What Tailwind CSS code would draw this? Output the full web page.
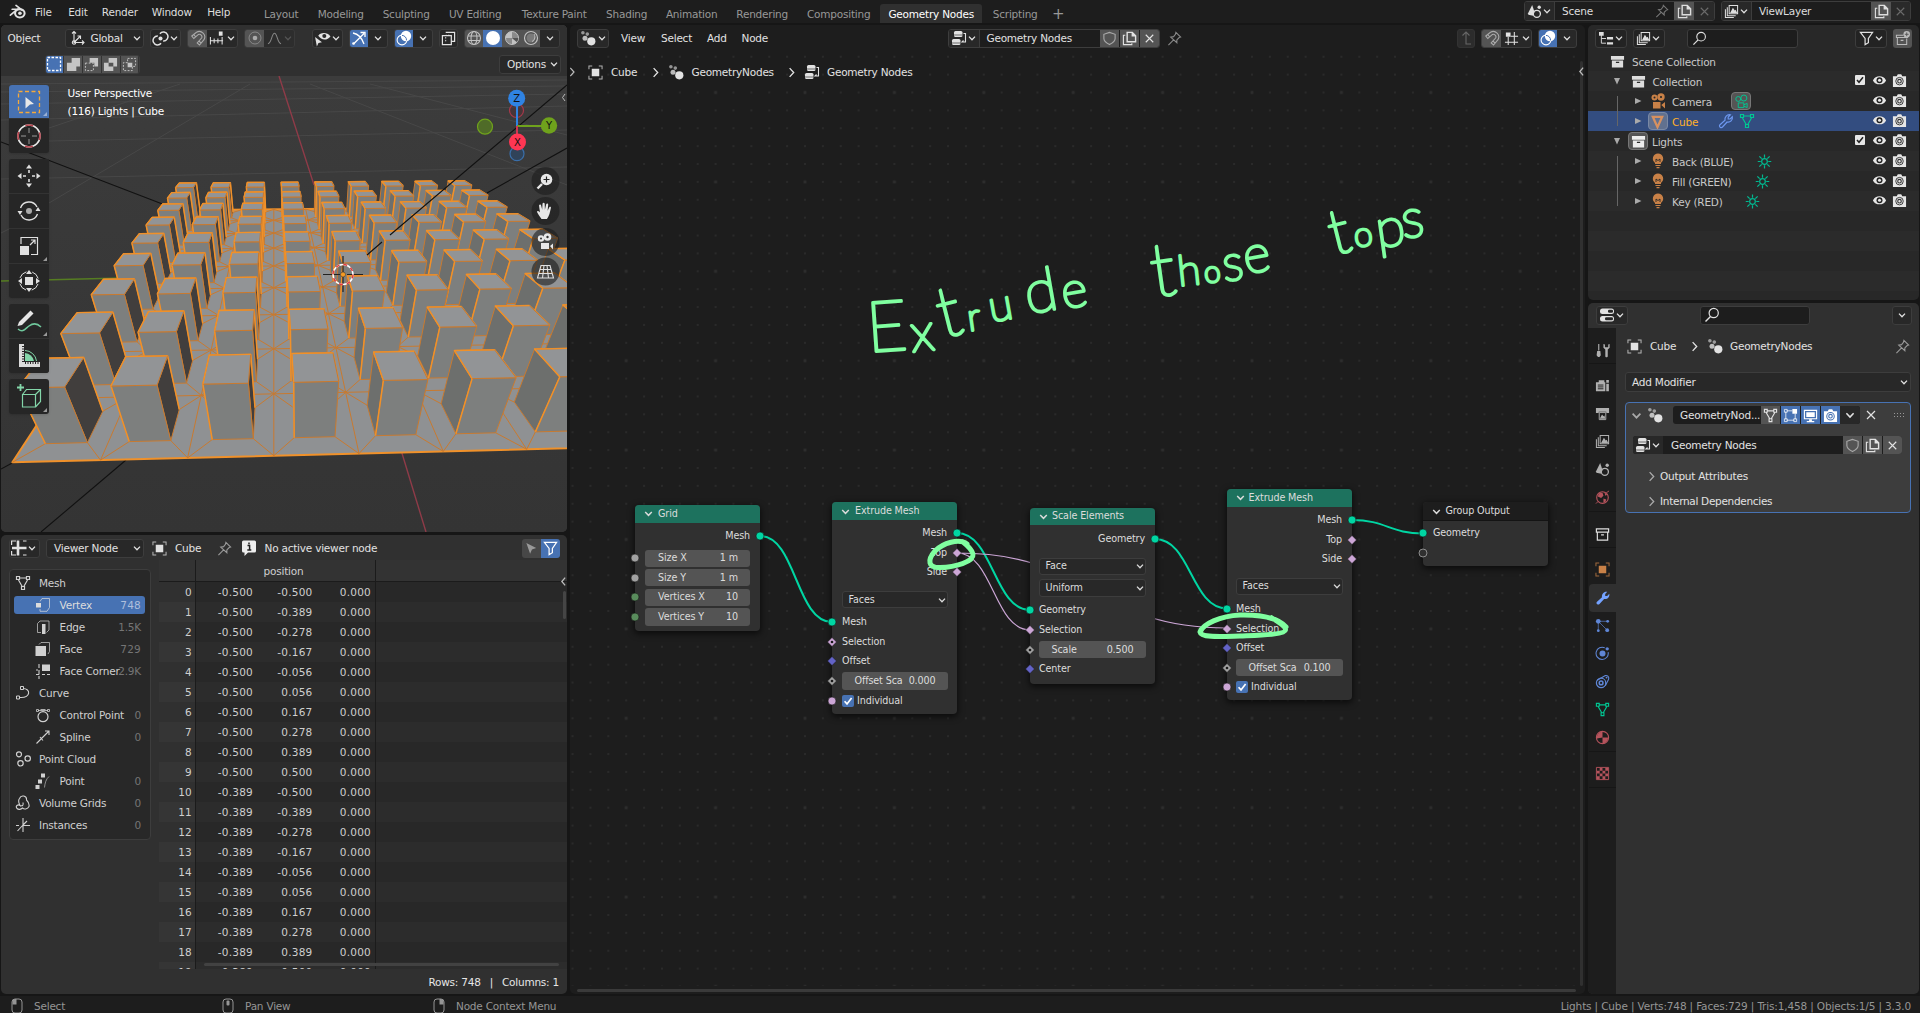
<!DOCTYPE html>
<html lang="en">
<head>
<meta charset="utf-8">
<title>Blender</title>
<script src="https://cdn.jsdelivr.net/npm/@tailwindcss/browser@4"></script>
</head>
<body class="w-[1920px] h-[1013px] overflow-hidden bg-[#161616] text-[#e2e2e2] font-['DejaVu_Sans',sans-serif] text-[10.5px] leading-[14px] tracking-[-0.22px] whitespace-nowrap select-none">

<svg class="hidden" xmlns="http://www.w3.org/2000/svg">
  <defs>
  <symbol id="chev" viewBox="0 0 10 10"><path d="M2 3.6 5 6.7 8 3.6" fill="none" stroke="currentColor" stroke-width="1.3"/></symbol>
  <symbol id="right" viewBox="0 0 10 10"><path d="M3.3 1 7 5 3.3 9" fill="none" stroke="currentColor" stroke-width="1.2"/></symbol>
  <symbol id="left" viewBox="0 0 10 10"><path d="M6.5 1.5 3.5 5 6.5 8.500" fill="none" stroke="currentColor" stroke-width="1.2"/></symbol>
  <symbol id="x" viewBox="0 0 16 16"><path d="M4 4l8 8M12 4l-8 8" fill="none" stroke="currentColor" stroke-width="1.2"/></symbol>
  <symbol id="logo" viewBox="0 0 16 16"><g fill="none" stroke="currentColor" stroke-linecap="round"><path d="M1.300 11.500 8 5.800M3 5.900h7M6.600 2.300l6 4.600" stroke-width="1.600"/><ellipse cx="10.200" cy="9.700" rx="4.500" ry="3.900" stroke-width="1.900"/></g><circle cx="10.300" cy="9.600" r="1.700" fill="currentColor"/></symbol>
  <symbol id="axes" viewBox="0 0 16 16"><g fill="none" stroke="currentColor" stroke-width="1.100"><path d="M4 1.500v11h10M4 12.500l6-6M2 3.500l2-2 2 2M12 10.500l2 2-2 2M7.500 6h3v3"/><circle cx="4" cy="12.500" r="1.700"/></g></symbol>
  <symbol id="pivot" viewBox="0 0 16 16"><g fill="none" stroke="currentColor" stroke-width="1.400"><path d="M8.500 12.500A4.200 4.200 0 1 1 5.500 5.700M7.500 3.500a4.200 4.200 0 1 1 3 6.800"/></g><circle cx="8" cy="8" r="1.900" fill="currentColor"/></symbol>
  <symbol id="magnet" viewBox="0 0 16 16"><path d="M1.800 6 6.500 2.200a5.500 5.500 0 0 1 7.500 7.500L9.500 15l-2.300-2 4.400-5A2.500 2.500 0 0 0 8.200 4.600L3.800 8.500zM8.800 11l2.300 2M3.700 4.500l2 2.300" fill="none" stroke="currentColor" stroke-width="1.100"/></symbol>
  <symbol id="incr" viewBox="0 0 16 16"><path d="M1 10.500h14M1.500 6.500v8M5.500 8v5M9.500 8v5M14 6.500v8" stroke="currentColor" stroke-width="1.100"/><path d="M10.500.5h4v4.500h-4z" fill="currentColor"/></symbol>
  <symbol id="prop" viewBox="0 0 16 16"><circle cx="8" cy="8" r="6" fill="none" stroke="currentColor" opacity=".6"/><circle cx="8" cy="8" r="2.300" fill="currentColor"/></symbol>
  <symbol id="curvef" viewBox="0 0 16 16"><path d="M1 13.500c4-.5 4-11 7-11s3 10.500 7 11" fill="none" stroke="currentColor" stroke-width="1.100"/></symbol>
  <symbol id="viseye" viewBox="0 0 16 16"><path d="M4 5.500C6 2 12.500 2 15.500 6 12.500 10 7 10 4 5.500z" fill="currentColor"/><circle cx="9.700" cy="5.700" r="1.900" fill="#282828"/><path d="M1 6.500l6.500 5-3.300.8-1.500 3.200z" fill="currentColor"/></symbol>
  <symbol id="gizmo" viewBox="0 0 16 16"><path d="M2 3c5 1 9 5 11 11M2.500 14 13 3.500M9.500 2.500H14V7" fill="none" stroke="currentColor" stroke-width="1.300"/><circle cx="2.500" cy="13.500" r="1.300" fill="currentColor"/></symbol>
  <symbol id="overlay" viewBox="0 0 16 16"><circle cx="10" cy="6" r="5.200" fill="currentColor"/><circle cx="6" cy="10" r="4.900" fill="none" stroke="currentColor" stroke-width="1.100"/><path d="M6 5.400a4.600 4.600 0 0 1 4.500 5" fill="none" stroke="#4772b3"/></symbol>
  <symbol id="xray" viewBox="0 0 16 16"><path d="M5 1.500h9.500V11H11M1.500 5h9.500v9.500H1.500z" fill="none" stroke="currentColor" stroke-width="1.300"/><path d="M5 11V4.500h6" fill="none" stroke="currentColor" stroke-dasharray="1.500 1.500"/></symbol>
  <symbol id="globe" viewBox="0 0 16 16"><g fill="none" stroke="currentColor" stroke-width="1.100"><circle cx="8" cy="8" r="6.500"/><ellipse cx="8" cy="8" rx="3" ry="6.500"/><path d="M2 6h12M2 10.500h12"/></g></symbol>
  <symbol id="solid" viewBox="0 0 16 16"><circle cx="8" cy="8" r="7" fill="currentColor"/></symbol>
  <symbol id="matp" viewBox="0 0 16 16"><circle cx="8" cy="8" r="6.500" fill="#8a8a8a" stroke="currentColor"/><path d="M8 1.700V8H1.700A6.300 6.300 0 0 1 8 1.700zM8 8l5 4.200A6.300 6.300 0 0 1 8 14.300z" fill="currentColor"/><path d="M8 8h6.300A6.300 6.300 0 0 1 12.800 12z" fill="#545454"/></symbol>
  <symbol id="rend" viewBox="0 0 16 16"><circle cx="8" cy="8" r="6.500" fill="none" stroke="currentColor" stroke-width="1.200"/><circle cx="8" cy="8" r="4.500" fill="currentColor" opacity=".35"/><path d="M11 4c1.500 2 1.300 6-2 7.500" fill="none" stroke="currentColor"/></symbol>
  <symbol id="sel1" viewBox="0 0 16 16"><path d="M1.500 1.500h13v13h-13z" fill="none" stroke="currentColor" stroke-width="1.300" stroke-dasharray="2.500 1.500"/></symbol>
  <symbol id="sel2" viewBox="0 0 16 16"><path d="M6 1h9v9h-4v5H1V6h5z" fill="currentColor"/></symbol>
  <symbol id="sel3" viewBox="0 0 16 16"><path d="M6 1h9v9h-4V6H6z" fill="currentColor"/><path d="M1.500 6.500h8.500v8H1.500z" fill="none" stroke="currentColor" stroke-dasharray="2 1.500"/></symbol>
  <symbol id="sel4" viewBox="0 0 16 16"><path d="M6 1h9v9h-4v5H1V6h5zM6 6v4h5V6z" fill="currentColor" fill-rule="evenodd"/></symbol>
  <symbol id="sel5" viewBox="0 0 16 16"><path d="M6 6h5v5H6z" fill="currentColor"/><path d="M6 1.500h8.500V10H11v4.500H1.500V6H6z" fill="none" stroke="currentColor" stroke-dasharray="2 1.500"/></symbol>
  <symbol id="geo" viewBox="0 0 16 16"><g fill="currentColor"><circle cx="2.900" cy="2.800" r="1.800" opacity=".6"/><circle cx="7.300" cy="4.100" r="1.800" opacity=".6"/><circle cx="5" cy="8.200" r="2.500" opacity=".8"/><circle cx="11.300" cy="11.300" r="4.100"/></g></symbol>
  <symbol id="tree" viewBox="0 0 16 16"><rect x="3" y="1" width="8.500" height="6" rx="1.500" fill="currentColor"/><rect x="1" y="9" width="8.500" height="6" rx="1.500" fill="currentColor"/><path d="M2 5h10M0 13h10" stroke="#1d1d1d" stroke-width=".6"/><path d="M12.500 3.500h2v8.500h-3.500l1.500-1.500" fill="none" stroke="currentColor" stroke-width="1.100"/></symbol>
  <symbol id="shield" viewBox="0 0 16 16"><path d="M8 1.500 2 3.500V8c0 3.500 4 5.500 6 6.500 2-1 6-3 6-6.500V3.500z" fill="none" stroke="currentColor" stroke-width="1.200"/></symbol>
  <symbol id="copy" viewBox="0 0 16 16"><path d="M5.500 1.500H11L14.500 5v6.500h-9zM11 1.500V5h3.500" fill="none" stroke="currentColor" stroke-width="1.500"/><path d="M3.500 4.500h-2v10h9v-1.500" fill="none" stroke="currentColor" stroke-width="1.200"/></symbol>
  <symbol id="pin" viewBox="0 0 16 16"><path d="M9.500 1.500l5 5-1.500.5-2.500 2.500v3L4 6.500 7 6l2-2.500zM7 9.500 1.500 15" fill="none" stroke="currentColor" stroke-width="1.200"/></symbol>
  <symbol id="uparr" viewBox="0 0 16 16"><path d="M13 14H8V2M4.500 5.500 8 2l3.500 3.500" fill="none" stroke="currentColor" stroke-width="1.100"/></symbol>
  <symbol id="gridsnap" viewBox="0 0 16 16"><path d="M4.500 6v9M11 1v14M1 12h14M7 5.500h8" stroke="currentColor" stroke-width="1.100"/><path d="M2 1.500h5V6H2z" fill="currentColor"/></symbol>
  <symbol id="scene" viewBox="0 0 16 16"><path d="M5.500 1 8 8.500l-1.500 4-5-1L1 10z" fill="currentColor"/><circle cx="10.500" cy="10.500" r="3.800" fill="none" stroke="currentColor" stroke-width="1.400"/><circle cx="13" cy="3.500" r="1.800" fill="currentColor"/></symbol>
  <symbol id="layers" viewBox="0 0 16 16"><path d="M5.500 1.500h9v9h-9zM3.500 3.500v9h9M1.500 5.500v9h9" fill="none" stroke="currentColor" stroke-width="1.100"/><path d="M6.500 9.500 9.500 4l2 3 1-1 1.500 3.500z" fill="currentColor"/></symbol>
  <symbol id="outl" viewBox="0 0 16 16"><path d="M0 1h5v4H0zM8.500 6.500H15V9H8.500zM8.500 12H15v2.500H8.500z" fill="currentColor"/><path d="M2.500 4v9h5M2.500 8h5" fill="none" stroke="currentColor"/></symbol>
  <symbol id="search" viewBox="0 0 16 16"><circle cx="9.700" cy="6" r="4.600" fill="none" stroke="currentColor" stroke-width="1.200"/><path d="M6.500 9.500 1.500 14.500" stroke="currentColor" stroke-width="1.400"/></symbol>
  <symbol id="funnel" viewBox="0 0 16 16"><path d="M1.500 1.500h13L10 8v4.500L6.500 14.500V8z" fill="none" stroke="currentColor" stroke-width="1.300"/></symbol>
  <symbol id="newcol" viewBox="0 0 16 16"><path d="M9 4.500H1.500V7H14M2.500 7v7.500h10V8M6 10h3" fill="none" stroke="currentColor" stroke-width="1.100"/><circle cx="12.500" cy="3.500" r="3.500" fill="currentColor"/><path d="M12.500 1.500v4M10.500 3.500h4" stroke="#545454"/></symbol>
  <symbol id="coll" viewBox="0 0 16 16"><path d="M1 2h14v4H1zM2 7h12v7.500H2z" fill="currentColor"/><path d="M6.300 9h3.500" stroke="#282828" stroke-width="1.400"/></symbol>
  <symbol id="collo" viewBox="0 0 16 16"><path d="M1.500 2h13v3.500h-13zM2.500 5.500h11v8.500h-11zM6.500 8.500h3" fill="none" stroke="currentColor" stroke-width="1.300"/></symbol>
  <symbol id="cam" viewBox="0 0 16 16"><circle cx="4.500" cy="4.500" r="3" fill="currentColor"/><circle cx="11" cy="4" r="3.700" fill="currentColor"/><circle cx="4.500" cy="4.500" r="1" fill="#282828"/><circle cx="11" cy="4" r="1.100" fill="#282828"/><path d="M3 9h7.500v6.500H3zM11.300 12l3.700-3v6.500z" fill="currentColor"/></symbol>
  <symbol id="camo" viewBox="0 0 16 16"><g fill="none" stroke="currentColor"><circle cx="4.500" cy="5.300" r="2.600"/><circle cx="10.500" cy="4.300" r="3.200"/><path d="M4.500 9.500h6v5h-6zM10.500 11.500 14 10v4.500l-3.500-1.500"/></g></symbol>
  <symbol id="meshobj" viewBox="0 0 16 16"><path d="M3 3h10L8 14z" fill="none" stroke="currentColor" stroke-width="2.400"/></symbol>
  <symbol id="meshd" viewBox="0 0 16 16"><path d="M4.500 3h7M3.500 5l3.700 6.500M12.500 5l-3.700 6.500M1.500 1.500h3v3h-3zM11.500 1.500h3v3h-3zM6.500 11.500h3v3h-3z" fill="none" stroke="currentColor" stroke-width="1.200"/></symbol>
  <symbol id="wrench" viewBox="0 0 16 16"><path d="M2.200 14.200a1.500 1.500 0 0 1-.2-2.400L7 7.300C6.400 4 9 1.200 12.300 1.800L10.200 4v2h2l2.100-2.200c.7 3.300-2.100 5.900-5.200 5.200L4.500 14a1.800 1.800 0 0 1-2.300.2z" fill="currentColor"/></symbol>
  <symbol id="wrencho" viewBox="0 0 16 16"><path d="M2.200 14.200a1.500 1.500 0 0 1-.2-2.400L7 7.300C6.400 4 9 1.200 12.300 1.800L10.200 4v2h2l2.100-2.200c.7 3.300-2.100 5.900-5.200 5.200L4.500 14a1.800 1.800 0 0 1-2.300.2z" fill="none" stroke="currentColor" stroke-width="1.200"/></symbol>
  <symbol id="bulb" viewBox="0 0 16 16"><path d="M8 .5a5.200 5.200 0 0 0-3 9.400V11h6V9.900A5.200 5.200 0 0 0 8 .5zM5.500 12h5v1h-5zM6.500 14h3v1.200h-3z" fill="currentColor"/><path d="M6 9V6l2 1.500L10 6v3" fill="none" stroke="#282828" stroke-width=".9"/></symbol>
  <symbol id="sun" viewBox="0 0 16 16"><circle cx="8" cy="8" r="3" fill="none" stroke="currentColor" stroke-width="1.300"/><path d="M8 .5v3.500M8 12v3.500M.8 8H4M12 8h3.200M2.500 2.500 5 5M11 11l2.500 2.500M13.500 2.500 11 5M5 11l-2.500 2.500" stroke="currentColor" stroke-width="1.300"/></symbol>
  <symbol id="check" viewBox="0 0 12 12"><rect x="1" y="1" width="10" height="10" rx="1" fill="#e6e6e6"/><path d="M3 6l2 2.300L9 3.200" fill="none" stroke="#222" stroke-width="1.500"/></symbol>
  <symbol id="eye" viewBox="0 0 16 16"><path d="M1 8c2.500-6 11.500-6 14 0-2.500 5.500-11.500 5.500-14 0z" fill="currentColor"/><circle cx="8" cy="7.700" r="3.200" fill="#222"/><circle cx="8" cy="7.700" r="1.600" fill="currentColor"/></symbol>
  <symbol id="photo" viewBox="0 0 16 16"><path d="M1 3.500h4L6.200 1.200h3.600L11 3.500h4v11.300H1z" fill="currentColor"/><circle cx="8" cy="8.700" r="4" fill="none" stroke="#333" stroke-width="1"/><circle cx="8" cy="8.700" r="1.900" fill="none" stroke="#333" stroke-width="1.200"/></symbol>
  <symbol id="photob" viewBox="0 0 16 16"><path d="M1 3.500h4L6.200 1.200h3.600L11 3.500h4v11.300H1z" fill="currentColor"/><circle cx="8" cy="8.700" r="4" fill="none" stroke="#4772b3" stroke-width="1.100"/><circle cx="8" cy="8.700" r="1.900" fill="none" stroke="#4772b3" stroke-width="1.200"/></symbol>
  <symbol id="props" viewBox="0 0 16 16"><rect x="1" y="1.500" width="14" height="5.500" rx="2.500" fill="currentColor"/><rect x="1" y="9" width="14" height="5.500" rx="2.500" fill="currentColor"/><rect x="9" y="2.700" width="5" height="3" rx="1.300" fill="#282828"/><rect x="6" y="10.200" width="8" height="3" rx="1.300" fill="#282828"/></symbol>
  <symbol id="obj" viewBox="0 0 16 16"><path d="M4 4h8v8H4z" fill="currentColor"/><path d="M1 4.500V1h3.500M11.500 1H15v3.500M15 11.500V15h-3.500M4.500 15H1v-3.500" fill="none" stroke="currentColor" stroke-width="1.100" opacity=".75"/></symbol>
  <symbol id="tool" viewBox="0 0 16 16"><path d="M4 1v7" stroke="currentColor" stroke-width="1.200"/><path d="M2.300 8.500h3.400l.5 4.500-1.500 2h-1.500l-1.500-2zM9 1v4l2 2v7c0 1.500 2.600 1.500 2.600 0V7l2-2V1l-1.500.5v3h-3.500v-3z" fill="currentColor"/></symbol>
  <symbol id="render" viewBox="0 0 16 16"><path d="M1 4.500h3V2.500h6v2h1V14H1zM12 2h2.800v3H12zM12 6h2.800v8H12z" fill="currentColor"/><path d="M3 7.500h6M3 9.500h6M3 11.500h6" stroke="#1d1d1d"/></symbol>
  <symbol id="output" viewBox="0 0 16 16"><path d="M1 2h14v5.500h-3V6H4v1.500H1z" fill="currentColor"/><path d="M4.500 7h7v7.500h-7z" fill="none" stroke="currentColor"/><path d="M5 13.500 7.500 9l1.500 2 1-1 1 3.500z" fill="currentColor"/></symbol>
  <symbol id="world" viewBox="0 0 16 16"><circle cx="8" cy="8" r="6.200" fill="none" stroke="currentColor" stroke-width="1.200"/><path d="M4 3.500 8 3 9 6 6.500 8.500 3 7zM9 9l3 1-1 3-2 .5zM10 2l3 3-2 1z" fill="currentColor"/><path d="M12 3l3-2M1 14.500l2.500-2.500" stroke="currentColor"/></symbol>
  <symbol id="part" viewBox="0 0 16 16"><path d="M3.500 3.500 14 14M3.500 3.500V14M3.500 3.500H14" stroke="currentColor" opacity=".7"/><circle cx="3.500" cy="3.500" r="2.500" fill="currentColor"/><circle cx="13" cy="13" r="2" fill="currentColor"/><circle cx="3.500" cy="13.500" r="1.500" fill="currentColor"/><circle cx="13.500" cy="3.500" r="1.500" fill="currentColor"/></symbol>
  <symbol id="phys" viewBox="0 0 16 16"><path d="M10.500 2A6.500 6.500 0 1 0 14 6.500" fill="none" stroke="currentColor" stroke-width="1.100"/><circle cx="8" cy="8" r="3.200" fill="currentColor"/><circle cx="13" cy="3" r="1.800" fill="currentColor"/></symbol>
  <symbol id="cons" viewBox="0 0 16 16"><path d="M2 7 11 1.700a3 3 0 0 1 3.500 4L11 12.500" fill="none" stroke="currentColor" stroke-width="1.200"/><circle cx="6.500" cy="9.500" r="5" fill="none" stroke="currentColor" stroke-width="1.300"/><circle cx="6.500" cy="9.500" r="2" fill="none" stroke="currentColor" stroke-width="1.600"/><circle cx="12.300" cy="3.800" r="1" fill="currentColor"/></symbol>
  <symbol id="mat" viewBox="0 0 16 16"><circle cx="8" cy="8" r="6.500" fill="none" stroke="currentColor" stroke-width="1.200"/><path d="M8 1.500V8H14A6.500 6.500 0 0 1 8 14.500V8L2 9A6.500 6.500 0 0 1 8 1.500z" fill="currentColor"/></symbol>
  <symbol id="tex" viewBox="0 0 16 16"><path d="M1.500 1.500h13v13h-13z" fill="none" stroke="currentColor"/><path d="M5 2h3v3H5zM11 2h3v3h-3zM2 5h3v3H2zM8 5h3v3H8zM5 8h3v3H5zM11 8h3v3h-3zM2 11h3v3H2zM8 11h3v3H8z" fill="currentColor"/></symbol>
  <symbol id="edit" viewBox="0 0 16 16"><path d="M4 3h6M3 4v8M4 13h8M13 12V6" fill="none" stroke="currentColor" opacity=".8"/><path d="M10 1h5v5h-5z" fill="currentColor"/><path d="M1.500 1.500h3v3h-3zM1.500 11.500h3v3h-3zM11.500 11.500h3v3h-3z" fill="none" stroke="currentColor" opacity=".8"/></symbol>
  <symbol id="mon" viewBox="0 0 16 16"><path d="M1.500 2.500h13v9h-13zM4 14.500h8" fill="none" stroke="currentColor" stroke-width="1.200"/><path d="M3.500 4.500h9v5h-9zM6.500 12h3v2h-3z" fill="currentColor"/></symbol>
  <symbol id="sheet" viewBox="0 0 16 16"><path d="M.600 1H5M.600.500v4.500M15.500 1H12M.600 15.500V11M.600 15H5M15.500 15H12" stroke="currentColor" fill="none" stroke-width="1.200"/><path d="M7 .5v15M1 8h14.500" stroke="currentColor" stroke-width="2.600"/></symbol>
  <symbol id="info" viewBox="0 0 16 16"><path d="M2.500 .500h11A1.500 1.500 0 0 1 15 2v9a1.500 1.500 0 0 1-1.500 1.500H7L3.500 16v-3.500h-1A1.500 1.500 0 0 1 1 11V2A1.500 1.500 0 0 1 2.500.5z" fill="currentColor"/><path d="M6.500 5.500H8.600v4M6.300 9.900h4M8 2.500v1.700" stroke="#222" stroke-width="1.500" fill="none"/></symbol>
  <symbol id="curs" viewBox="0 0 16 16"><path d="M2.500 2 13 7.500 8.500 9l-2 4.500z" fill="currentColor"/></symbol>
  <symbol id="vert" viewBox="0 0 16 16"><path d="M5 4.500l2-3h7.500v9L12 14.300H5V12" fill="none" stroke="currentColor" opacity=".7"/><path d="M1 6h5v4.500H1z" fill="currentColor"/></symbol>
  <symbol id="edge" viewBox="0 0 16 16"><path d="M6 13.500H2.500V4.500L5 2h9v9L11.500 13.500" fill="none" stroke="currentColor" opacity=".7"/><path d="M7 5h3.500v10H7z" fill="currentColor"/></symbol>
  <symbol id="face" viewBox="0 0 16 16"><path d="M4 3.500 6 1.500h8.500v9L13 13" fill="none" stroke="currentColor" opacity=".7"/><path d="M.5 5H11v10H.5z" fill="currentColor"/></symbol>
  <symbol id="corner" viewBox="0 0 16 16"><path d="M7 1.500h8V8H7z" fill="currentColor"/><path d="M4 1v4M4 7v4.500M4 13v3M1 11.500h3M7 11.500h3M12 11.500h3M1 7h2" stroke="currentColor" stroke-width="1.100"/></symbol>
  <symbol id="curve" viewBox="0 0 16 16"><path d="M8 3.500C16 3.500 16 13 5 12.500" fill="none" stroke="currentColor" stroke-width="1.100"/><path d="M5.500 1.500h3v3h-3zM1.500 11h3v3h-3z" fill="none" stroke="currentColor"/></symbol>
  <symbol id="ctrl" viewBox="0 0 16 16"><circle cx="8" cy="9.700" r="5" fill="none" stroke="currentColor" stroke-width="1.200"/><path d="M3 3.500h10M5.500 2.500h5M1.500 2.500h2v2h-2zM12.500 2.500h2v2h-2z" fill="none" stroke="currentColor" stroke-width=".8"/></symbol>
  <symbol id="spline" viewBox="0 0 16 16"><path d="M1.500 14.500 14 2M10 2h4v4M5 8l3 3.500" fill="none" stroke="currentColor" stroke-width="1.100"/></symbol>
  <symbol id="pcloud" viewBox="0 0 16 16"><g fill="none" stroke="currentColor" stroke-width="1.200"><circle cx="4" cy="3.300" r="2.500"/><circle cx="12.700" cy="7.500" r="2.700"/><circle cx="5.500" cy="12.300" r="2.700"/></g></symbol>
  <symbol id="point" viewBox="0 0 16 16"><path d="M6 .5h4v4H6zM3 6.500h4v4H3zM.5 12h4v4h-4z" fill="currentColor"/><path d="M14 3.500C11 6 10 10 9.500 14.500" fill="none" stroke="currentColor" opacity=".6"/></symbol>
  <symbol id="vol" viewBox="0 0 16 16"><path d="M2 13.500C0 11 3 9 5 10.500 4 8 2.500 6 4.500 3.500 6-.5 12 .5 11.500 5 13.500 7 14.500 9 14 11.500c-1.500 3-5 3-6.500 1.500-1.500 1.500-4 2-5.500.5zM5 10.500c2.500.5 3.500.5 3-3" fill="none" stroke="currentColor" stroke-width="1.100"/></symbol>
  <symbol id="inst" viewBox="0 0 16 16"><path d="M8 1v14M8 8.500h7M1 8.500h3M8 8 2.500 14M8 8l4-4" fill="none" stroke="currentColor" stroke-width="1.100"/></symbol>
  <symbol id="mL" viewBox="0 0 12 16"><rect x="1" y="1" width="10" height="14" rx="3" fill="none" stroke="currentColor"/><path d="M1.500 6.500V3.500A2.500 2.500 0 0 1 4 1h1.500v5.500z" fill="currentColor"/></symbol>
  <symbol id="mM" viewBox="0 0 12 16"><rect x="1" y="1" width="10" height="14" rx="3" fill="none" stroke="currentColor"/><rect x="4.500" y="2.500" width="3" height="5" rx="1" fill="currentColor"/></symbol>
  <symbol id="mR" viewBox="0 0 12 16"><rect x="1" y="1" width="10" height="14" rx="3" fill="none" stroke="currentColor"/><path d="M10.500 6.500V3.500A2.500 2.500 0 0 0 8 1H6.500v5.500z" fill="currentColor"/></symbol>
  <symbol id="dia" viewBox="0 0 10 10"><path d="M5 .5 9.500 5 5 9.500.5 5z" fill="currentColor" stroke="#161616" stroke-width=".5"/></symbol>
  <symbol id="diao" viewBox="0 0 10 10"><path d="M5 .5 9.500 5 5 9.500.5 5z" fill="currentColor" stroke="#161616" stroke-width=".5"/><circle cx="5" cy="5" r="1.300" fill="#1a1a1a"/></symbol>
  <symbol id="dot" viewBox="0 0 10 10"><circle cx="5" cy="5" r="4" fill="currentColor" stroke="#161616" stroke-width=".6"/></symbol>
  <symbol id="tick" viewBox="0 0 12 12"><rect width="12" height="12" rx="2" fill="#4772b3"/><path d="M2.600 6.200 5 8.900 9.600 3" fill="none" stroke="#fff" stroke-width="1.700"/></symbol>
  </defs>
</svg>

<!-- Top bar -->
<header class="h-[23px] bg-[#1d1d1d] flex items-start">
  <svg class="size-[17px] ml-[9px] mt-[3px]"><use href="#logo"/></svg>
  <nav class="flex h-[23px] items-center text-[#dedede] pl-[9px]">
    <span class="w-[33.2px]">File</span><span class="w-[33.6px]">Edit</span><span class="w-[50px]">Render</span><span class="w-[55.400px]">Window</span><span class="w-[47px]">Help</span>
  </nav>
  <nav class="flex mt-[4px] h-[19px] items-center text-center text-[#989898]">
    <span class="w-[54px]">Layout</span><span class="w-[65px]">Modeling</span><span class="w-[66px]">Sculpting</span><span class="w-[72px]">UV Editing</span><span class="w-[86px]">Texture Paint</span><span class="w-[59px]">Shading</span><span class="w-[71px]">Animation</span><span class="w-[70px]">Rendering</span><span class="w-[83px]">Compositing</span><span class="w-[102px] h-[19px] leading-[20px] bg-[#303030] text-white rounded-t-[3px]">Geometry Nodes</span><span class="w-[66px]">Scripting</span><span class="w-[20px] text-[15px] leading-[14px]">+</span>
  </nav>
  <div class="ml-auto mr-[9px] mt-[1px] flex h-[20px] gap-[6px] text-[#dedede]">
    <div class="flex w-[191px] rounded-[3px] overflow-hidden border border-[#3d3d3d] items-center bg-[#1d1d1d]">
      <div class="w-[30px] h-full bg-[#282828] border-r border-[#3d3d3d] flex items-center justify-center"><svg class="size-[15px]"><use href="#scene"/></svg><svg class="size-[10px]"><use href="#chev"/></svg></div>
      <span class="pl-[7px] flex-1">Scene</span><svg class="size-[14px] text-[#777] mr-[5px]"><use href="#pin"/></svg>
      <div class="w-[20px] h-full bg-[#545454] flex items-center justify-center"><svg class="size-[15px]"><use href="#copy"/></svg></div>
      <div class="w-[20px] h-full bg-[#2a2a2a] text-[#6a6a6a] flex items-center justify-center"><svg class="size-[15px]"><use href="#x"/></svg></div>
    </div>
    <div class="flex w-[190px] rounded-[3px] overflow-hidden border border-[#3d3d3d] items-center bg-[#1d1d1d]">
      <div class="w-[30px] h-full bg-[#282828] border-r border-[#3d3d3d] flex items-center justify-center"><svg class="size-[15px]"><use href="#layers"/></svg><svg class="size-[10px]"><use href="#chev"/></svg></div>
      <span class="pl-[7px] flex-1">ViewLayer</span>
      <div class="w-[20px] h-full bg-[#545454] flex items-center justify-center"><svg class="size-[15px]"><use href="#copy"/></svg></div>
      <div class="w-[19px] h-full bg-[#2a2a2a] text-[#6a6a6a] flex items-center justify-center"><svg class="size-[15px]"><use href="#x"/></svg></div>
    </div>
  </div>
</header>

<main class="flex h-[969px] mt-[2px]">
<!-- Left column -->
<section class="w-[566px] ml-[1px] flex flex-col gap-[3px]">

  <!-- 3D viewport -->
  <div class="relative h-[507px] rounded-[5px] overflow-hidden bg-[#393939]">
    <svg id="scene3d" class="absolute inset-0" width="566" height="507" viewBox="1 25 566 507">
      <defs><linearGradient id="vg" x1="0" y1="0" x2="0" y2="1"><stop offset="0" stop-color="#3d3d3d"/><stop offset=".5" stop-color="#383838"/><stop offset="1" stop-color="#343434"/></linearGradient></defs>
      <rect x="1" y="25" width="566" height="507" fill="url(#vg)"/>
      <g stroke="#4c4c4c" stroke-width="1" opacity=".75">
        <path d="M49 141 567 130M1 179 567 167M1 120 567 106M1 104 567 94M1 92 567 86M1 84 567 80" />
        <path d="M250 84 49 203M180 84 49 128M1 233 9 229M310 84 567 185M370 84 567 135"/>
      </g>
      <path d="M279 76 314 185M401 450 426 532" stroke="#8e3b48" stroke-width="1.400"/>
      <path d="M1 281 122 278" stroke="#567d22" stroke-width="1.500"/>
      <path d="M1 142 165 205M1 469 14 462M126 460 41 532M567 148 487 193" stroke="#111" stroke-width="1.100"/>
      <g id="mesh" stroke-linejoin="round"></g>
      <path d="M567 85 390 235M382 242 367 255" stroke="#111" stroke-width="1.100"/>
      <g fill="none">
        <path d="M343 256v17M343 276v16M323 274.500h17M347 274.500h16" stroke="#222" stroke-width="1.200"/>
        <circle cx="343" cy="274.500" r="10" stroke="#fff" stroke-width="1.500"/>
        <circle cx="343" cy="274.500" r="10" stroke="#e23b3b" stroke-width="1.500" stroke-dasharray="3.930 3.930"/>
        <circle cx="343" cy="274.500" r="2.500" fill="#f59a23" stroke="#333" stroke-width=".5"/>
      </g>
    </svg>

    <div class="relative bg-[#303030] h-[51px] pt-[3.500px]">
      <div class="flex h-[19px] items-center">
        <span class="w-[56.500px] pl-[6.500px]">Object</span>
        <div class="ml-[7px] w-[79px] h-[19px] rounded-[3px] border border-[#3d3d3d] bg-[#282828] flex items-center pl-[4px] pr-px"><svg class="size-[16px]"><use href="#axes"/></svg><span class="pl-[5px] flex-1">Global</span><svg class="size-[10px]"><use href="#chev"/></svg></div>
        <div class="ml-[6.500px] w-[31px] h-[19px] rounded-[3px] border border-[#3d3d3d] bg-[#282828] flex items-center justify-center"><svg class="size-[17px]"><use href="#pivot"/></svg><svg class="size-[10px]"><use href="#chev"/></svg></div>
        <div class="ml-[6px] w-[51px] h-[19px] rounded-[3px] border border-[#3d3d3d] bg-[#282828] flex items-center overflow-hidden"><div class="w-[19px] h-full bg-[#545454] flex items-center justify-center text-[#aaa]"><svg class="size-[16px]"><use href="#magnet"/></svg></div><svg class="size-[15px] ml-[2px]"><use href="#incr"/></svg><svg class="size-[10px] ml-[2px]"><use href="#chev"/></svg></div>
        <div class="ml-[6px] w-[51px] h-[19px] rounded-[3px] border border-[#3a3a3a] bg-[#2d2d2d] flex items-center overflow-hidden"><div class="w-[19px] h-full bg-[#545454] flex items-center justify-center text-[#aaa]"><svg class="size-[16px]"><use href="#prop"/></svg></div><svg class="size-[15px] ml-[3px] text-[#888]"><use href="#curvef"/></svg><svg class="size-[10px] ml-[1px] text-[#555]"><use href="#chev"/></svg></div>
        <div class="ml-[16.500px] w-[31px] h-[19px] rounded-[3px] border border-[#3d3d3d] bg-[#282828] flex items-center justify-center"><svg class="size-[17px]"><use href="#viseye"/></svg><svg class="size-[10px]"><use href="#chev"/></svg></div>
        <div class="ml-[6.500px] w-[39px] h-[19px] rounded-[3px] border border-[#3d3d3d] bg-[#282828] flex items-center overflow-hidden"><div class="w-[18px] h-full bg-[#4772b3] flex items-center justify-center text-white"><svg class="size-[16px]"><use href="#gizmo"/></svg></div><svg class="size-[10px] ml-[5px]"><use href="#chev"/></svg></div>
        <div class="ml-[6px] w-[39px] h-[19px] rounded-[3px] border border-[#3d3d3d] bg-[#282828] flex items-center overflow-hidden"><div class="w-[18px] h-full bg-[#4772b3] flex items-center justify-center text-white"><svg class="size-[16px]"><use href="#overlay"/></svg></div><svg class="size-[10px] ml-[5px]"><use href="#chev"/></svg></div>
        <div class="ml-[6px] w-[19px] h-[19px] rounded-[3px] border border-[#3d3d3d] bg-[#282828] flex items-center justify-center"><svg class="size-[15px]"><use href="#xray"/></svg></div>
        <div class="ml-[6px] w-[96px] h-[19px] rounded-[3px] border border-[#3d3d3d] bg-[#282828] flex items-center overflow-hidden text-[#c2c2c2]">
          <div class="w-[18px] h-full bg-[#545454] flex items-center justify-center"><svg class="size-[16px]"><use href="#globe"/></svg></div>
          <div class="w-[19px] h-full bg-[#4772b3] text-white flex items-center justify-center"><svg class="size-[16px]"><use href="#solid"/></svg></div>
          <div class="w-[19px] h-full bg-[#545454] flex items-center justify-center"><svg class="size-[16px]"><use href="#matp"/></svg></div>
          <div class="w-[19px] h-full bg-[#545454] flex items-center justify-center"><svg class="size-[16px]"><use href="#rend"/></svg></div>
          <svg class="size-[10px] ml-[5px] text-[#ddd]"><use href="#chev"/></svg>
        </div>
      </div>
      <div class="flex h-[19px] mt-[7px] items-center">
        <div class="ml-[43.500px] w-[95px] h-[19px] rounded-[3px] border border-[#3d3d3d] grid grid-cols-5 gap-px overflow-hidden bg-[#333] text-[#c5c5c5]">
          <div class="bg-[#4772b3] text-white flex items-center justify-center"><svg class="size-[16px]"><use href="#sel1"/></svg></div>
          <div class="bg-[#545454] flex items-center justify-center"><svg class="size-[15px]"><use href="#sel2"/></svg></div>
          <div class="bg-[#545454] flex items-center justify-center"><svg class="size-[15px]"><use href="#sel3"/></svg></div>
          <div class="bg-[#545454] flex items-center justify-center"><svg class="size-[15px]"><use href="#sel4"/></svg></div>
          <div class="bg-[#545454] flex items-center justify-center"><svg class="size-[15px]"><use href="#sel5"/></svg></div>
        </div>
        <div class="ml-auto mr-[6px] w-[62px] h-[19px] rounded-[3px] border border-[#3d3d3d] bg-[#282828] flex items-center justify-between pl-[7px] pr-px"><span>Options</span><svg class="size-[10px]"><use href="#chev"/></svg></div>
      </div>
    </div>

    <div class="relative flex">
      <div class="ml-[8px] mt-[9px] w-[40px] flex flex-col gap-[6px] text-[#e0e0e0]">
        <div class="rounded-[3px] overflow-hidden flex flex-col gap-px bg-[#333] shadow">
          <div class="relative h-[33px] bg-[#4772b3] flex items-center justify-center"><svg width="24" height="24" viewBox="0 0 24 24"><rect x="1.500" y="1.500" width="21" height="21" fill="none" stroke="#f5a93b" stroke-width="1.300" stroke-dasharray="4 2.500"/><path d="M8.500 7l8.500 7-4 .5-4.500 4z" fill="#e8e8e8"/></svg><svg class="absolute right-[2px] bottom-[2px] size-[4px]" viewBox="0 0 4 4"><path d="M4 0v4H0z" fill="#9ab0d4"/></svg></div>
          <div class="h-[34px] bg-[#262626] flex items-center justify-center"><svg width="26" height="26" viewBox="0 0 26 26" fill="none"><circle cx="13" cy="13" r="11" stroke="#e8e8e8" stroke-width="1.600"/><circle cx="13" cy="13" r="11" stroke="#b8404a" stroke-width="1.600" stroke-dasharray="8 9.280" stroke-dashoffset="4"/><path d="M13 5v5M13 16v5M5 13h5M16 13h5" stroke="#999"/></svg></div>
        </div>
        <div class="rounded-[3px] overflow-hidden flex flex-col gap-px bg-[#333] shadow">
          <div class="h-[34px] bg-[#262626] flex items-center justify-center"><svg width="24" height="24" viewBox="0 0 24 24" fill="currentColor"><path d="M12 .5l3 4H9zM12 23.500l-3-4h6zM.5 12l4-3v6zM23.500 12l-4 3V9z"/><path d="M12 6v3M12 15v3M6 12h3M15 12h3" stroke="currentColor" stroke-width="1.600"/></svg></div>
          <div class="h-[34px] bg-[#262626] flex items-center justify-center"><svg width="24" height="24" viewBox="0 0 24 24" fill="none" stroke="currentColor" stroke-width="1.400"><path d="M3.500 9A9 9 0 0 1 20 8M20.500 15A9 9 0 0 1 4 16"/><path d="M.5 12h5l-2.500 4zM18.500 12h5L21 8z" fill="currentColor" stroke="none"/><circle cx="12" cy="12" r="3" fill="#aaa" stroke="none"/></svg></div>
          <div class="relative h-[34px] bg-[#262626] flex items-center justify-center"><svg width="20" height="20" viewBox="0 0 20 20" fill="none" stroke="currentColor" stroke-width="1.200"><path d="M2 8V1.500h16.500V18.500H12M11 9l4.500-4.500M12 4h4v4"/><path d="M1 10h9v9H1z" fill="currentColor" stroke="none"/></svg><svg class="absolute right-[2px] bottom-[2px] size-[4px]" viewBox="0 0 4 4"><path d="M4 0v4H0z" fill="#999"/></svg></div>
          <div class="h-[34px] bg-[#262626] flex items-center justify-center"><svg width="24" height="24" viewBox="0 0 24 24" fill="currentColor"><path d="M8 8h8v8H8zM12 1l3 4H9zM12 23l-3-4h6zM1 12l4-3v6zM23 12l-4 3V9z"/><circle cx="12" cy="12" r="9.500" fill="none" stroke="currentColor" stroke-dasharray="9 5.920" stroke-dashoffset="-3"/></svg></div>
        </div>
        <div class="rounded-[3px] overflow-hidden flex flex-col gap-px bg-[#333] shadow">
          <div class="relative h-[34px] bg-[#262626] flex items-center justify-center"><svg width="26" height="24" viewBox="0 0 26 24"><path d="M1.500 17 3 13 14.500 1.500l3 3L6 16z" fill="#e6e6e6"/><path d="M2 20c5 4 7 0 11-3s8-3 12 1" fill="none" stroke="#6fc79c" stroke-width="1.500"/></svg><svg class="absolute right-[2px] bottom-[2px] size-[4px]" viewBox="0 0 4 4"><path d="M4 0v4H0z" fill="#999"/></svg></div>
          <div class="h-[34px] bg-[#262626] flex items-center justify-center"><svg width="22" height="24" viewBox="0 0 22 24"><path d="M1 0h5v18h16v5H1z" fill="#dcdcdc"/><path d="M7 9a10 10 0 0 1 9 8H7z" fill="#83d6a9"/><path d="M7 6.500A12 12 0 0 1 18.500 17" fill="none" stroke="#83d6a9"/><path d="M5 2v16M7 19h14" stroke="#262626" stroke-width="2" stroke-dasharray="1 1.500"/></svg></div>
        </div>
        <div class="relative rounded-[3px] overflow-hidden h-[34.500px] bg-[#262626] flex items-center justify-center shadow"><svg width="26" height="26" viewBox="0 0 26 26" fill="none" stroke="#83d6a9"><path d="M6.500 11.500h13v12.500h-13zM6.500 11.500 10.500 6.500h14v12L19.500 24M19.500 11.500l5-5" stroke-width="1.200"/><path d="M4.500 1v7M1 4.500h7" stroke-width="1.800"/></svg><svg class="absolute right-[2px] bottom-[2px] size-[4px]" viewBox="0 0 4 4"><path d="M4 0v4H0z" fill="#999"/></svg></div>
      </div>
      <div class="ml-[18.500px] mt-[7.500px] text-white leading-[18px]"><p>User Perspective</p><p>(116) Lights | Cube</p></div>
    </div>

    <svg class="absolute inset-0" width="566" height="507" viewBox="1 25 566 507" font-family="DejaVu Sans" font-size="10" text-anchor="middle">
      <g fill="#1c1c1c" fill-opacity=".6"><circle cx="545.500" cy="181" r="14"/><circle cx="545.500" cy="211" r="14"/><circle cx="545.500" cy="242" r="14"/><circle cx="545.500" cy="271.500" r="14"/></g>
      <g fill="none" stroke-width="1.200"><circle cx="516.500" cy="110.500" r="7" stroke="#a5394a" fill="#5a2d35" fill-opacity=".4"/><circle cx="485" cy="126.700" r="7.500" stroke="#6fa21c" fill="#4f6b28"/><circle cx="517" cy="153.700" r="7" stroke="#3a6ea8" fill="#2c4766" fill-opacity=".7"/></g>
      <path d="M517 126V100" stroke="#2f83e3" stroke-width="2"/><path d="M517 126H545" stroke="#6fa21c" stroke-width="2"/><path d="M517 126V138" stroke="#d23650" stroke-width="2"/>
      <circle cx="516.700" cy="98.300" r="8.500" fill="#2f83e3"/><circle cx="549" cy="125.500" r="8.200" fill="#6fa21c"/><circle cx="517.500" cy="142" r="8.500" fill="#ff3653"/>
      <g fill="#111" letter-spacing="0"><text x="516.700" y="102">Z</text><text x="549" y="129.200">Y</text><text x="517.500" y="145.700">X</text></g>
      <g fill="#e8e8e8"><circle cx="546.500" cy="179.500" r="5.800"/><path d="M542 184l-4.500 4.500" stroke="#e8e8e8" stroke-width="2.400"/><path d="M546.500 176.500v6M543.500 179.500h6" stroke="#222" stroke-width="1.200"/>
      <path d="M541.500 219c-2-3-3.500-5-4.500-7 0-1.500 1.500-1.500 3 .5l-1-7c.5-1.500 2-1 2.200.3l1 4 .3-6c.3-1.300 2-1.300 2.200 0l.2 6 1.300-5.500c.5-1.200 2-.8 2 .4l-.6 6 1.700-3.500c.8-1 1.900-.4 1.600.8-1 4-1.500 8-4 11z"/>
      <circle cx="541" cy="238.500" r="3.200"/><circle cx="547.500" cy="237" r="3.800"/><path d="M541 243h8v6h-8zM550 246l3-2.500v6z"/><circle cx="541" cy="238.500" r="1" fill="#333"/><circle cx="547.500" cy="237" r="1.200" fill="#333"/></g>
      <path d="M541 265.500h9l3.500 12.500h-16zM540 269.500h11.500M539 273.500h13.500M544 265.500 542.500 278M547 265.500 548.500 278" fill="none" stroke="#e0e0e0" stroke-width="1.100"/>
      <path d="M565 94l-2.500 3.500 2.500 3.500" fill="none" stroke="#bbb"/>
    </svg>
  </div>

  <!-- Spreadsheet -->
  <div class="relative h-[459px] rounded-[5px] overflow-hidden bg-[#303030] flex flex-col">
    <div class="h-[25px] pt-[3.500px] flex items-start shrink-0">
      <div class="ml-[7.500px] w-[31px] h-[19px] rounded-[3px] border border-[#3d3d3d] bg-[#282828] flex items-center justify-center"><svg class="size-[16px]"><use href="#sheet"/></svg><svg class="size-[10px]"><use href="#chev"/></svg></div>
      <div class="ml-[6.500px] w-[98px] h-[19px] rounded-[3px] border border-[#3d3d3d] bg-[#282828] flex items-center pl-[7px] pr-px"><span class="flex-1">Viewer Node</span><svg class="size-[10px]"><use href="#chev"/></svg></div>
      <div class="flex items-center h-[19px] flex-1"><svg class="size-[15px] ml-[7.500px]"><use href="#obj"/></svg><span class="ml-[8.500px] w-[40px]">Cube</span><svg class="size-[15px] text-[#999] ml-[2px]"><use href="#pin"/></svg><svg class="size-[16px] ml-[9px] text-[#eee]"><use href="#info"/></svg><span class="ml-[7.500px]">No active viewer node</span></div>
      <div class="flex w-[38px] h-[19px] mr-[7px] rounded-[3px] overflow-hidden"><div class="w-[19px] bg-[#474747] text-[#999] flex items-center justify-center"><svg class="size-[15px]"><use href="#curs"/></svg></div><div class="w-[19px] bg-[#4772b3] text-white flex items-center justify-center"><svg class="size-[15px]"><use href="#funnel"/></svg></div></div>
    </div>
    <div class="flex h-[409px] shrink-0">
      <div class="ml-[7.500px] mt-[8.500px] w-[142px] h-[271.500px] rounded-[4px] border border-[#3d3d3d] bg-[#282828] pt-[2.500px] px-[4.500px] text-[#d0d0d0]">
        <div class="h-[22px] flex items-center"><svg class="size-[16px] mx-[1px]"><use href="#meshd"/></svg><span class="ml-[7px]">Mesh</span></div>
        <div class="h-[18px] my-[2px] flex items-center rounded-[3px] bg-[#4772b3] pr-[4px] text-[#dcdcdc]"><svg class="size-[16px] ml-[21px]"><use href="#vert"/></svg><span class="ml-[8.500px] flex-1">Vertex</span><span class="text-[#aebfdc] tracking-[0.200px]">748</span></div>
        <div class="h-[22px] flex items-center pr-[4px]"><svg class="size-[16px] ml-[21px]"><use href="#edge"/></svg><span class="ml-[8.500px] flex-1">Edge</span><span class="text-[#757575]">1.5K</span></div>
        <div class="h-[22px] flex items-center pr-[4px]"><svg class="size-[16px] ml-[21px]"><use href="#face"/></svg><span class="ml-[8.500px] flex-1">Face</span><span class="text-[#757575] tracking-[0.200px]">729</span></div>
        <div class="h-[22px] flex items-center pr-[4px]"><svg class="size-[16px] ml-[21px]"><use href="#corner"/></svg><span class="ml-[8.500px] w-0 flex-1">Face Corner</span><span class="text-[#757575]">2.9K</span></div>
        <div class="h-[22px] flex items-center"><svg class="size-[16px] mx-[1px]"><use href="#curve"/></svg><span class="ml-[7px]">Curve</span></div>
        <div class="h-[22px] flex items-center pr-[4px]"><svg class="size-[16px] ml-[21px]"><use href="#ctrl"/></svg><span class="ml-[8.500px] flex-1">Control Point</span><span class="text-[#757575]">0</span></div>
        <div class="h-[22px] flex items-center pr-[4px]"><svg class="size-[16px] ml-[21px]"><use href="#spline"/></svg><span class="ml-[8.500px] flex-1">Spline</span><span class="text-[#757575]">0</span></div>
        <div class="h-[22px] flex items-center"><svg class="size-[16px] mx-[1px]"><use href="#pcloud"/></svg><span class="ml-[7px]">Point Cloud</span></div>
        <div class="h-[22px] flex items-center pr-[4px]"><svg class="size-[16px] ml-[21px]"><use href="#point"/></svg><span class="ml-[8.500px] flex-1">Point</span><span class="text-[#757575]">0</span></div>
        <div class="h-[22px] flex items-center pr-[4px]"><svg class="size-[16px] mx-[1px]"><use href="#vol"/></svg><span class="ml-[7px] flex-1">Volume Grids</span><span class="text-[#757575]">0</span></div>
        <div class="h-[22px] flex items-center pr-[4px]"><svg class="size-[16px] mx-[1px]"><use href="#inst"/></svg><span class="ml-[7px] flex-1">Instances</span><span class="text-[#757575]">0</span></div>
      </div>
      <div class="ml-[8.500px] w-[408px] h-[409px] overflow-hidden text-[#cfcfcf]">
        <div class="flex h-[22px] border-b border-[#1b1b1b] bg-[#333]"><div class="w-[37px] border-r border-[#1b1b1b]"></div><div class="w-[180px] border-r border-[#1b1b1b] text-center leading-[22px] pr-[4px]">position</div></div>
        <div id="rows" class="tracking-[0.220px]"></div>
      </div>
    </div>
    <div class="flex-1 flex items-center justify-end pr-[8px] gap-[9px] text-[#e6e6e6]"><span>Rows: 748</span><span>|</span><span>Columns: 1</span></div>
    <div class="absolute left-[203px] top-[428px] w-[355px] h-[3px] rounded bg-[#424242]"></div>
    <div class="absolute left-[562px] top-[56px] w-[3px] h-[28px] rounded bg-[#454545]"></div>
    <svg class="absolute left-[557px] top-[41px] size-[11px] text-[#bbb]"><use href="#left"/></svg>
  </div>
</section>

<!-- Node editor -->
<section class="relative ml-[3px] w-[1015px] h-[969px] rounded-[5px] overflow-hidden bg-[#1d1d1d]">
  <svg class="absolute inset-0" width="1015" height="969" viewBox="570 25 1015 969">
    <defs>
      <pattern id="p1" width="17.880" height="17.880" patternUnits="userSpaceOnUse" x="885.460" y="262.360"><rect x="8" y="8" width="1.900" height="1.900" fill="#2b2b2b"/></pattern>
      <pattern id="p2" width="89.400" height="89.400" patternUnits="userSpaceOnUse" x="849.700" y="226.600"><rect x="43.300" y="43.300" width="2.800" height="2.800" fill="#2d2d2d"/></pattern>
    </defs>
    <rect x="570" y="50" width="1008" height="936" fill="url(#p1)"/><rect x="570" y="50" width="1008" height="936" fill="url(#p2)"/>
    <g fill="none" stroke="#00d6a3" stroke-width="2">
      <path d="M760 536C796 536 796 622 832 622M957 533C993 533 994 610 1030 610M1155 539C1191 539 1191 608.500 1227 608.500M1352 520C1386 520 1390 533.500 1423 533.500"/>
    </g>
    <g fill="none" stroke="#cca6d6" stroke-width="1.200"><path d="M957 553C993 553 994 630 1030 630M957 553C1092 553 1092 628 1227 628"/></g>
  </svg>

  <div class="relative h-[25px] pt-[3.500px] flex items-start">
    <div class="ml-[7px] w-[32px] h-[19px] rounded-[3px] border border-[#3d3d3d] bg-[#282828] flex items-center justify-center"><svg class="size-[16px]"><use href="#geo"/></svg><svg class="size-[10px] ml-px"><use href="#chev"/></svg></div>
    <nav class="flex items-center h-[19px] ml-[12px] w-[327px]"><span class="w-[40px]">View</span><span class="w-[46px]">Select</span><span class="w-[34.500px]">Add</span><span>Node</span></nav>
    <div class="flex w-[212px] h-[19px] rounded-[3px] overflow-hidden border border-[#3d3d3d] items-center bg-[#1d1d1d]">
      <div class="w-[31px] h-full bg-[#282828] border-r border-[#3d3d3d] flex items-center justify-center"><svg class="size-[16px]"><use href="#tree"/></svg><svg class="size-[10px]"><use href="#chev"/></svg></div>
      <span class="pl-[6.500px] flex-1">Geometry Nodes</span>
      <div class="w-[59px] h-full grid grid-cols-3 gap-px"><div class="bg-[#545454] text-[#a8a8a8] flex items-center justify-center"><svg class="size-[15px]"><use href="#shield"/></svg></div><div class="bg-[#545454] flex items-center justify-center"><svg class="size-[15px]"><use href="#copy"/></svg></div><div class="bg-[#545454] flex items-center justify-center"><svg class="size-[15px]"><use href="#x"/></svg></div></div>
    </div>
    <svg class="size-[15px] ml-[7px] mt-[2px] text-[#888]"><use href="#pin"/></svg>
    <div class="ml-auto mr-[8px] flex gap-[6px]">
      <div class="w-[18px] h-[19px] rounded-[3px] bg-[#2c2c2c] border border-[#333] text-[#666] flex items-center justify-center"><svg class="size-[16px]"><use href="#uparr"/></svg></div>
      <div class="w-[51px] h-[19px] rounded-[3px] border border-[#3d3d3d] bg-[#282828] flex items-center overflow-hidden"><div class="w-[19px] h-full bg-[#545454] flex items-center justify-center text-[#aaa]"><svg class="size-[16px]"><use href="#magnet"/></svg></div><svg class="size-[15px] ml-[3px]"><use href="#gridsnap"/></svg><svg class="size-[10px] ml-[2px]"><use href="#chev"/></svg></div>
      <div class="w-[39px] h-[19px] rounded-[3px] border border-[#3d3d3d] bg-[#282828] flex items-center overflow-hidden"><div class="w-[18px] h-full bg-[#4772b3] flex items-center justify-center text-white"><svg class="size-[16px]"><use href="#overlay"/></svg></div><svg class="size-[10px] ml-[5px]"><use href="#chev"/></svg></div>
    </div>
  </div>
  <div class="relative h-[20px] mt-[12px] flex items-center">
    <svg class="size-[10px] ml-[-3px] text-[#bbb]"><use href="#right"/></svg>
    <svg class="size-[15px] ml-[10.500px]"><use href="#obj"/></svg><span class="ml-[8.500px] w-[39px]">Cube</span><svg class="size-[11px]"><use href="#right"/></svg>
    <svg class="size-[16px] ml-[7px]"><use href="#geo"/></svg><span class="ml-[7.500px] w-[94.500px]">GeometryNodes</span><svg class="size-[11px]"><use href="#right"/></svg>
    <svg class="size-[16px] ml-[7px]"><use href="#tree"/></svg><span class="ml-[7px]">Geometry Nodes</span>
  </div>

  <!-- Nodes on the canvas -->
  <div class="absolute left-[65px] top-[480px] w-[125px] h-[126px] rounded-[4px] bg-[#303030] shadow-[0_2px_6px_1px_rgba(0,0,0,0.6)] text-[9.600px] tracking-[-0.120px] text-[#dcdcdc]">
    <div class="h-[17.500px] rounded-t-[4px] bg-[#1d725e] flex items-center pl-[8px]"><svg class="size-[11px]"><use href="#chev"/></svg><span class="ml-[4px]">Grid</span></div>
    <div class="relative h-[20px] mt-[3px] flex items-center justify-end pr-[10px]">Mesh<svg class="absolute -right-[5px] size-[10px] text-[#00d6a3]"><use href="#dot"/></svg></div>
    <div class="mt-[4px] px-[10px] flex flex-col gap-[2.300px]">
      <div class="relative h-[17.300px] rounded-[3px] bg-[#545454] flex items-center justify-between pl-[13px] pr-[12px]"><svg class="absolute -left-[15px] size-[10px] text-[#a1a1a1]"><use href="#dot"/></svg><span>Size X</span><span>1 m</span></div>
      <div class="relative h-[17.300px] rounded-[3px] bg-[#545454] flex items-center justify-between pl-[13px] pr-[12px]"><svg class="absolute -left-[15px] size-[10px] text-[#a1a1a1]"><use href="#dot"/></svg><span>Size Y</span><span>1 m</span></div>
      <div class="relative h-[17.300px] rounded-[3px] bg-[#545454] flex items-center justify-between pl-[13px] pr-[12px]"><svg class="absolute -left-[15px] size-[10px] text-[#598c5c]"><use href="#dot"/></svg><span>Vertices X</span><span>10</span></div>
      <div class="relative h-[17.300px] rounded-[3px] bg-[#545454] flex items-center justify-between pl-[13px] pr-[12px]"><svg class="absolute -left-[15px] size-[10px] text-[#598c5c]"><use href="#dot"/></svg><span>Vertices Y</span><span>10</span></div>
    </div>
  </div>

  <div class="absolute left-[262px] top-[477px] w-[125px] h-[212px] rounded-[4px] bg-[#303030] shadow-[0_2px_6px_1px_rgba(0,0,0,0.6)] text-[9.600px] tracking-[-0.120px] text-[#dcdcdc]">
    <div class="h-[18px] rounded-t-[4px] bg-[#1d725e] flex items-center pl-[8px]"><svg class="size-[11px]"><use href="#chev"/></svg><span class="ml-[4px]">Extrude Mesh</span></div>
    <div class="pt-[3px]">
      <div class="relative h-[19.700px] flex items-center justify-end pr-[10px]">Mesh<svg class="absolute -right-[5px] size-[10px] text-[#00d6a3]"><use href="#dot"/></svg></div>
      <div class="relative h-[19.700px] flex items-center justify-end pr-[10px]">Top<svg class="absolute -right-[5px] size-[10px] text-[#cca6d6]"><use href="#dia"/></svg></div>
      <div class="relative h-[19.700px] flex items-center justify-end pr-[10px]">Side<svg class="absolute -right-[5px] size-[10px] text-[#cca6d6]"><use href="#dia"/></svg></div>
    </div>
    <div class="mt-[9px] mx-[9.500px] h-[17px] rounded-[3px] border border-[#3d3d3d] bg-[#282828] flex items-center justify-between pl-[6px]"><span>Faces</span><svg class="size-[10px]"><use href="#chev"/></svg></div>
    <div class="mt-[4px]">
      <div class="relative h-[19.700px] flex items-center pl-[10px]">Mesh<svg class="absolute -left-[5px] size-[10px] text-[#00d6a3]"><use href="#dot"/></svg></div>
      <div class="relative h-[19.700px] flex items-center pl-[10px]">Selection<svg class="absolute -left-[5px] size-[10px] text-[#cca6d6]"><use href="#diao"/></svg></div>
      <div class="relative h-[19.700px] flex items-center pl-[10px]">Offset<svg class="absolute -left-[5px] size-[10px] text-[#6363c7]"><use href="#dia"/></svg></div>
    </div>
    <div class="relative mt-px mx-[9.500px] h-[17.500px] rounded-[3px] bg-[#545454] flex items-center justify-between pl-[13px] pr-[12px]"><svg class="absolute -left-[14.500px] size-[10px] text-[#a1a1a1]"><use href="#diao"/></svg><span>Offset Sca</span><span>0.000</span></div>
    <div class="relative mt-px h-[20px] flex items-center pl-[10px]"><svg class="absolute -left-[5px] size-[10px] text-[#cca6d6]"><use href="#dot"/></svg><svg class="size-[12px] mr-[3px]"><use href="#tick"/></svg>Individual</div>
  </div>

  <div class="absolute left-[459.500px] top-[482.500px] w-[125px] h-[176.500px] rounded-[4px] bg-[#303030] shadow-[0_2px_6px_1px_rgba(0,0,0,0.6)] text-[9.600px] tracking-[-0.120px] text-[#dcdcdc]">
    <div class="h-[17.500px] rounded-t-[4px] bg-[#1d725e] flex items-center pl-[8px]"><svg class="size-[11px]"><use href="#chev"/></svg><span class="ml-[3.500px]">Scale Elements</span></div>
    <div class="relative mt-[4px] h-[19.700px] flex items-center justify-end pr-[9.500px]">Geometry<svg class="absolute -right-[5px] size-[10px] text-[#00d6a3]"><use href="#dot"/></svg></div>
    <div class="mt-[9px] mx-[9px] h-[17px] rounded-[3px] border border-[#3d3d3d] bg-[#282828] flex items-center justify-between pl-[6px]"><span>Face</span><svg class="size-[10px]"><use href="#chev"/></svg></div>
    <div class="mt-[4.500px] mx-[9px] h-[17.500px] rounded-[3px] border border-[#3d3d3d] bg-[#282828] flex items-center justify-between pl-[6px]"><span>Uniform</span><svg class="size-[10px]"><use href="#chev"/></svg></div>
    <div class="mt-[3.300px]">
      <div class="relative h-[19.700px] flex items-center pl-[9.500px]">Geometry<svg class="absolute -left-[5px] size-[10px] text-[#00d6a3]"><use href="#dot"/></svg></div>
      <div class="relative h-[19.700px] flex items-center pl-[9.500px]">Selection<svg class="absolute -left-[5px] size-[10px] text-[#cca6d6]"><use href="#dia"/></svg></div>
    </div>
    <div class="relative mt-[1.500px] mx-[9px] h-[17.500px] rounded-[3px] bg-[#545454] flex items-center justify-between pl-[13px] pr-[12px]"><svg class="absolute -left-[14px] size-[10px] text-[#a1a1a1]"><use href="#diao"/></svg><span>Scale</span><span>0.500</span></div>
    <div class="relative mt-[0.500px] h-[19.700px] flex items-center pl-[9.500px]">Center<svg class="absolute -left-[5px] size-[10px] text-[#6363c7]"><use href="#dia"/></svg></div>
  </div>

  <div class="absolute left-[656.500px] top-[464px] w-[125px] h-[211px] rounded-[4px] bg-[#303030] shadow-[0_2px_6px_1px_rgba(0,0,0,0.6)] text-[9.600px] tracking-[-0.120px] text-[#dcdcdc]">
    <div class="h-[17.500px] rounded-t-[4px] bg-[#1d725e] flex items-center pl-[8px]"><svg class="size-[11px]"><use href="#chev"/></svg><span class="ml-[3px]">Extrude Mesh</span></div>
    <div class="pt-[3.500px]">
      <div class="relative h-[19.700px] flex items-center justify-end pr-[9.500px]">Mesh<svg class="absolute -right-[5px] size-[10px] text-[#00d6a3]"><use href="#dot"/></svg></div>
      <div class="relative h-[19.700px] flex items-center justify-end pr-[9.500px]">Top<svg class="absolute -right-[5px] size-[10px] text-[#cca6d6]"><use href="#dia"/></svg></div>
      <div class="relative h-[19.700px] flex items-center justify-end pr-[9.500px]">Side<svg class="absolute -right-[5px] size-[10px] text-[#cca6d6]"><use href="#dia"/></svg></div>
    </div>
    <div class="mt-[8.500px] mx-[9px] h-[17px] rounded-[3px] border border-[#3d3d3d] bg-[#282828] flex items-center justify-between pl-[6px]"><span>Faces</span><svg class="size-[10px]"><use href="#chev"/></svg></div>
    <div class="mt-[4.500px]">
      <div class="relative h-[19.700px] flex items-center pl-[9.500px]">Mesh<svg class="absolute -left-[5px] size-[10px] text-[#00d6a3]"><use href="#dot"/></svg></div>
      <div class="relative h-[19.700px] flex items-center pl-[9.500px]">Selection<svg class="absolute -left-[5px] size-[10px] text-[#cca6d6]"><use href="#dia"/></svg></div>
      <div class="relative h-[19.700px] flex items-center pl-[9.500px]">Offset<svg class="absolute -left-[5px] size-[10px] text-[#6363c7]"><use href="#dia"/></svg></div>
    </div>
    <div class="relative mt-px mx-[9px] h-[17px] rounded-[3px] bg-[#545454] flex items-center justify-between pl-[13px] pr-[12px]"><svg class="absolute -left-[14px] size-[10px] text-[#a1a1a1]"><use href="#diao"/></svg><span>Offset Sca</span><span>0.100</span></div>
    <div class="relative mt-[0.500px] h-[20px] flex items-center pl-[9.500px]"><svg class="absolute -left-[5px] size-[10px] text-[#cca6d6]"><use href="#dot"/></svg><svg class="size-[12px] mr-[3px]"><use href="#tick"/></svg>Individual</div>
  </div>

  <div class="absolute left-[853px] top-[477px] w-[125px] h-[64px] rounded-[4px] bg-[#303030] shadow-[0_2px_6px_1px_rgba(0,0,0,0.6)] text-[9.600px] tracking-[-0.120px] text-[#dcdcdc]">
    <div class="h-[19px] rounded-t-[4px] bg-[#1d1d1d] border-b border-[#141414] flex items-center pl-[8px]"><svg class="size-[11px]"><use href="#chev"/></svg><span class="ml-[3.500px]">Group Output</span></div>
    <div class="relative mt-[2px] h-[19.700px] flex items-center pl-[10px]">Geometry<svg class="absolute -left-[5px] size-[10px] text-[#00d6a3]"><use href="#dot"/></svg></div>
    <div class="relative h-[19.700px] flex items-center"><svg class="absolute -left-[5px] size-[10px]" viewBox="0 0 10 10"><circle cx="5" cy="5" r="4" fill="#303030" stroke="#8c8c8c"/></svg></div>
  </div>

  <!-- Annotation layer -->
  <svg class="absolute inset-0" width="1015" height="969" viewBox="570 25 1015 969" fill="none" stroke="#80ffa0" stroke-linecap="round" stroke-linejoin="round">
    <path d="M967 544C959 538 943 543 935 551C927 560 928 568 940 567.500C955 567 974 562 973 554C972 550 968 546 963 542" stroke-width="5"/>
    <path d="M1286 627C1278 618 1262 614.500 1240 615C1220 616 1203 624 1200 632C1201 638 1222 636.500 1240 636C1262 635 1285 634.500 1285.500 630C1286 627 1280 623 1272 618" stroke-width="5"/>
    <g fill="#80ffa0" stroke-width="3" font-family="Lato" font-weight="100" letter-spacing="0">
      <text><tspan x="868" y="352" font-size="70" rotate="-4">E</tspan><tspan x="912" y="352" font-size="54" rotate="-6">x</tspan><tspan x="943" y="338" font-size="70" rotate="-14">t</tspan><tspan x="969" y="331" font-size="38" rotate="-8">r</tspan><tspan x="991" y="322" font-size="44" rotate="-10">u</tspan><tspan x="1028" y="314" font-size="60" rotate="-10">d</tspan><tspan x="1064" y="309" font-size="50" rotate="-10">e</tspan></text>
      <text><tspan x="1154" y="297" font-size="74" rotate="-8">t</tspan><tspan x="1179" y="286" font-size="42" rotate="-6">h</tspan><tspan x="1205" y="283" font-size="30" rotate="-6">o</tspan><tspan x="1224" y="281" font-size="50" rotate="-6">s</tspan><tspan x="1246" y="274" font-size="52" rotate="-10">e</tspan></text>
      <text><tspan x="1334" y="255" font-size="62" rotate="-14">t</tspan><tspan x="1355" y="247" font-size="34" rotate="-6">o</tspan><tspan x="1378" y="248" font-size="54" rotate="-8">p</tspan><tspan x="1403" y="238" font-size="54" rotate="-6">s</tspan></text>
    </g>
  </svg>
  <div class="absolute left-[7px] top-[964px] w-[999px] h-[3px] rounded bg-[#3a3a3a]"></div>
  <div class="absolute left-[1010px] top-[36px] w-[3px] h-[925px] rounded bg-[#303030]"></div>
  <svg class="absolute left-[1006px] top-[41px] size-[11px] text-[#bbb]"><use href="#left"/></svg>
</section>

<!-- Right column -->
<section class="ml-[3px] w-[331px] flex flex-col gap-[3px]">
  <!-- Outliner -->
  <div class="h-[275px] rounded-[5px] overflow-hidden bg-[#282828] text-[#c8c8c8]">
    <div class="h-[27px] pt-[3.500px] flex items-start text-[#dedede]">
      <div class="ml-[7px] w-[32px] h-[19px] rounded-[3px] border border-[#3d3d3d] bg-[#232323] flex items-center justify-center"><svg class="size-[15px]"><use href="#outl"/></svg><svg class="size-[10px]"><use href="#chev"/></svg></div>
      <div class="ml-[5.500px] w-[32px] h-[19px] rounded-[3px] border border-[#3d3d3d] bg-[#232323] flex items-center justify-center"><svg class="size-[15px]"><use href="#layers"/></svg><svg class="size-[10px]"><use href="#chev"/></svg></div>
      <div class="ml-[22.500px] w-[111px] h-[19px] rounded-[3px] border border-[#3d3d3d] bg-[#1d1d1d] flex items-center pl-[4px]"><svg class="size-[15px]"><use href="#search"/></svg></div>
      <div class="ml-[57px] w-[32px] h-[19px] rounded-[3px] border border-[#3d3d3d] bg-[#232323] flex items-center justify-center"><svg class="size-[15px]"><use href="#funnel"/></svg><svg class="size-[10px]"><use href="#chev"/></svg></div>
      <div class="ml-[5.500px] w-[19px] h-[19px] rounded-[3px] bg-[#545454] text-[#bbb] flex items-center justify-center"><svg class="size-[15px]"><use href="#newcol"/></svg></div>
    </div>
    <div id="outliner" class="relative"></div>
  </div>

  <!-- Properties -->
  <div class="h-[691px] rounded-[5px] overflow-hidden bg-[#303030] flex flex-col">
    <div class="h-[25px] pt-[2.500px] flex items-start shrink-0">
      <div class="ml-[8px] w-[32px] h-[19px] rounded-[3px] border border-[#3d3d3d] bg-[#282828] flex items-center justify-center"><svg class="size-[16px]"><use href="#props"/></svg><svg class="size-[10px]"><use href="#chev"/></svg></div>
      <div class="ml-[71.500px] w-[110px] h-[19px] rounded-[3px] border border-[#3d3d3d] bg-[#1d1d1d] flex items-center pl-[3px]"><svg class="size-[16px]"><use href="#search"/></svg></div>
      <div class="ml-[82.500px] w-[20px] h-[19px] rounded-[3px] border border-[#3d3d3d] bg-[#282828] flex items-center justify-center"><svg class="size-[10px]"><use href="#chev"/></svg></div>
    </div>
    <div class="flex flex-1">
      <div class="w-[28px] bg-[#1d1d1d] flex flex-col items-center pl-[1px] text-[#b0b0b0]">
        <div class="h-[36px] w-full pt-[15px] flex justify-center border-b border-[#161616]"><svg class="size-[15px]"><use href="#tool"/></svg></div>
        <div class="w-full h-[148px] pt-[7.500px] border-b border-[#161616] flex flex-col items-center">
          <div class="h-[28px] flex items-center"><svg class="size-[15px]"><use href="#render"/></svg></div>
          <div class="h-[28px] flex items-center"><svg class="size-[15px]"><use href="#output"/></svg></div>
          <div class="h-[28px] flex items-center"><svg class="size-[15px]"><use href="#layers"/></svg></div>
          <div class="h-[28px] flex items-center"><svg class="size-[15px]"><use href="#scene"/></svg></div>
          <div class="h-[28px] flex items-center text-[#b5535c]"><svg class="size-[15px]"><use href="#world"/></svg></div>
        </div>
        <div class="w-full h-[36px] border-b border-[#161616] flex justify-center pt-[15px] text-[#ddd]"><svg class="size-[15px]"><use href="#collo"/></svg></div>
        <div class="w-full h-[204px] pt-[8px] border-b border-[#161616] flex flex-col items-center text-[#5f86d6]">
          <div class="h-[28px] flex items-center text-[#c98147]"><svg class="size-[15px]"><use href="#obj"/></svg></div>
          <div class="h-[28px] w-full rounded-l-[4px] bg-[#303030] flex items-center justify-center text-[#74a2ff]"><svg class="size-[16px]"><use href="#wrench"/></svg></div>
          <div class="h-[28px] flex items-center"><svg class="size-[15px]"><use href="#part"/></svg></div>
          <div class="h-[28px] flex items-center"><svg class="size-[15px]"><use href="#phys"/></svg></div>
          <div class="h-[28px] flex items-center"><svg class="size-[15px]"><use href="#cons"/></svg></div>
          <div class="h-[28px] flex items-center text-[#00c793]"><svg class="size-[15px]"><use href="#meshd"/></svg></div>
          <div class="h-[28px] flex items-center text-[#b5535c]"><svg class="size-[15px]"><use href="#mat"/></svg></div>
        </div>
        <div class="w-full h-[36px] border-b border-[#161616] flex justify-center pt-[14px] text-[#b5535c]"><svg class="size-[15px]"><use href="#tex"/></svg></div>
      </div>
      <div class="w-[303px] pl-[8.500px] pr-[8.500px]">
        <div class="h-[20px] mt-[8px] flex items-center"><svg class="size-[15px] ml-[2px]"><use href="#obj"/></svg><span class="ml-[8.500px] w-[39px]">Cube</span><svg class="size-[11px]"><use href="#right"/></svg><svg class="size-[16px] ml-[6.500px]"><use href="#geo"/></svg><span class="ml-[7.500px] flex-1">GeometryNodes</span><svg class="size-[15px] mr-px text-[#999]"><use href="#pin"/></svg></div>
        <div class="mt-[16px] h-[20px] rounded-[3px] border border-[#3d3d3d] bg-[#282828] flex items-center pl-[6.500px] pr-px"><span class="flex-1">Add Modifier</span><svg class="size-[10px]"><use href="#chev"/></svg></div>
        <div class="mt-[10px] h-[111px] rounded-[4px] border border-[#4772b3] bg-[#3d3d3d]">
          <div class="mt-[3px] h-[18px] flex items-center">
            <svg class="size-[13px] ml-[4.500px] text-[#aaa]"><use href="#chev"/></svg><svg class="size-[16px] ml-[4px]"><use href="#geo"/></svg>
            <div class="ml-[10px] w-[187px] h-[18px] rounded-[3px] overflow-hidden flex bg-[#1d1d1d]"><span class="w-[88px] pl-[7px] leading-[18px]">GeometryNod...</span>
              <div class="w-[19px] bg-[#545454] flex items-center justify-center"><svg class="size-[15px]"><use href="#meshd"/></svg></div>
              <div class="w-[19px] ml-px bg-[#4772b3] flex items-center justify-center text-white"><svg class="size-[15px]"><use href="#edit"/></svg></div>
              <div class="w-[19px] ml-px bg-[#4772b3] flex items-center justify-center text-white"><svg class="size-[15px]"><use href="#mon"/></svg></div>
              <div class="w-[19px] ml-px bg-[#4772b3] flex items-center justify-center text-white"><svg class="size-[15px]"><use href="#photob"/></svg></div>
              <div class="flex-1 bg-[#282828] flex items-center justify-center"><svg class="size-[12px]"><use href="#chev"/></svg></div>
            </div>
            <svg class="size-[16px] ml-[3px]"><use href="#x"/></svg>
            <svg class="ml-[15px] w-[11px] h-[5px] text-[#999]" viewBox="0 0 11 5"><path d="M0 .5h11M0 3.500h11" stroke="currentColor" stroke-dasharray="1 2"/></svg>
          </div>
          <div class="mt-[12px] ml-[7.500px] w-[269px] h-[18px] rounded-[3px] overflow-hidden flex bg-[#1d1d1d]">
            <div class="w-[30px] bg-[#282828] flex items-center justify-center"><svg class="size-[16px]"><use href="#tree"/></svg><svg class="size-[10px]"><use href="#chev"/></svg></div>
            <span class="ml-px flex-1 pl-[7px] leading-[18px]">Geometry Nodes</span>
            <div class="w-[59px] h-full grid grid-cols-3 gap-px"><div class="bg-[#545454] text-[#a8a8a8] flex items-center justify-center"><svg class="size-[15px]"><use href="#shield"/></svg></div><div class="bg-[#545454] flex items-center justify-center"><svg class="size-[15px]"><use href="#copy"/></svg></div><div class="bg-[#545454] flex items-center justify-center"><svg class="size-[15px]"><use href="#x"/></svg></div></div>
          </div>
          <div class="mt-[12px] h-[20px] flex items-center pl-[20px]"><svg class="size-[11px] text-[#aaa]"><use href="#right"/></svg><span class="ml-[3.500px]">Output Attributes</span></div>
          <div class="mt-[5px] h-[20px] flex items-center pl-[20px]"><svg class="size-[11px] text-[#aaa]"><use href="#right"/></svg><span class="ml-[3.500px] tracking-[-0.300px]">Internal Dependencies</span></div>
        </div>
      </div>
    </div>
  </div>
</section>
</main>

<!-- Status bar -->
<footer class="mt-[2px] h-[17px] bg-[#1d1d1d] flex items-center text-[#959595] pt-[3px]">
  <svg class="w-[12px] h-[16px] ml-[11px]"><use href="#mL"/></svg><span class="ml-[11px] w-[188px]">Select</span>
  <svg class="w-[12px] h-[16px]"><use href="#mM"/></svg><span class="ml-[11px] w-[188px]">Pan View</span>
  <svg class="w-[12px] h-[16px]"><use href="#mR"/></svg><span class="ml-[11px]">Node Context Menu</span>
  <span class="ml-auto mr-[9px] tracking-[-0.150px]">Lights | Cube | Verts:748 | Faces:729 | Tris:1,458 | Objects:1/5 | 3.3.0</span>
</footer>

<script>
// Spreadsheet rows: grid vertex positions, ten per column
const f = k => (-0.5 + k / 9).toFixed(3);
document.getElementById('rows').innerHTML = Array.from({length: 20}, (_, i) => `
  <div class="flex h-[20px] leading-[20px] text-right ${i % 2 ? 'bg-[#2c2c2c]' : 'bg-[#282828]'}">
    <span class="w-[37px] pr-[3px] border-r border-[#1b1b1b] ${i % 2 ? 'bg-[#353535]' : 'bg-[#303030]'}">${i}</span>
    <span class="w-[57px]">${f(Math.floor(i / 10))}</span><span class="w-[59.500px]">${f(i % 10)}</span>
    <span class="w-[63.500px] pr-[4px] border-r border-[#1b1b1b]">0.000</span>
  </div>`).join('');

// Outliner rows
const ic = (id, cls) => `<svg class="${cls}"><use href="#${id}"/></svg>`;
const tail = chk => `<span class="ml-auto flex items-center mb-[2px] text-[#e6e6e6]">${chk ? ic('check', 'size-[12px] mr-[6.500px]') : ''}${ic('eye', 'size-[15px] mr-[5px]')}${ic('photo', 'size-[15px] mr-[12px]')}</span>`;
const down = '<svg class="size-[8px] ml-[25px]" viewBox="0 0 8 8"><path d="M1 1h6L4 7.500z" fill="#aaa"/></svg>';
const side = '<svg class="size-[8px] ml-[45.500px]" viewBox="0 0 8 8"><path d="M1 1v6l6.500-3z" fill="#aaa"/></svg>';
const light = (name, gap) => side + ic('bulb', 'size-[16px] ml-[8px] text-[#c98147]') + `<span class="ml-[6.500px] pt-px">${name}</span>` + ic('sun', gap);
const rows = [
  ic('coll', 'size-[15px] ml-[22px] text-[#ddd]') + '<span class="ml-[7px] pt-px">Scene Collection</span>',
  down + ic('coll', 'size-[15px] ml-[9.500px] text-[#ddd]') + '<span class="ml-[7px] pt-px">Collection</span>' + tail(1),
  side + ic('cam', 'size-[16px] ml-[8px] text-[#c98147]') + '<span class="ml-[6.500px] w-[59px] pt-px">Camera</span><span class="w-[20px] h-[18px] rounded-[4px] border border-[#777] bg-[#555] flex items-center justify-center">' + ic('camo', 'size-[15px] text-[#00c793]') + '</span>' + tail(0),
  side + '<span class="ml-[6px] w-[20px] h-[18px] rounded-[4px] border border-[#7a89a5] bg-[#61718f] flex items-center justify-center">' + ic('meshobj', 'size-[15px] text-[#d69160]') + '</span><span class="ml-[4.500px] w-[46px] pt-px text-[#ffaf29]">Cube</span>' + ic('wrencho', 'size-[16px] text-[#6d97ee]') + ic('meshd', 'size-[16px] ml-[4.500px] text-[#00c793]') + tail(0),
  down + '<span class="ml-[7px] w-[20px] h-[18px] rounded-[4px] border border-[#777] bg-[#555] flex items-center justify-center">' + ic('coll', 'size-[15px] text-[#eee]') + '</span><span class="ml-[4px] pt-px">Lights</span>' + tail(1),
  light('Back (BLUE)', 'size-[15px] ml-[23.500px] text-[#00b890]') + tail(0),
  light('Fill (GREEN)', 'size-[15px] ml-[23.500px] text-[#00b890]') + tail(0),
  light('Key (RED)', 'size-[15px] ml-[22px] text-[#00b890]') + tail(0),
];
document.getElementById('outliner').innerHTML = Array.from({length: 12}, (_, i) => `
  <div class="flex h-[20px] items-center -translate-y-px ${i === 3 ? 'bg-[#334d80]' : i % 2 ? 'bg-[#2b2b2b]' : 'bg-[#282828]'}">${rows[i] || ''}</div>`).join('')
  + '<div class="absolute left-[29px] top-[44px] w-px h-[30px] bg-[#666]"></div><div class="absolute left-[29px] top-[104px] w-px h-[50px] bg-[#666]"></div>';

// Perspective projection of the extruded grid: u across, v away from the viewer, z = 1 on tower tops
const P = (u, v, z = 0) => {
  const w = 1 + 0.187 * v + 0.0055 * u - 0.1 * z;
  return [(273.8 + (85.7 * u - 2.6 * z) / w).toFixed(1), (63 + (392.7 - 90 * z) / w).toFixed(1)];
};
const poly = (pts, a) => `<polygon points="${pts.map(p => p.join(',')).join(' ')}" ${a}/>`;
const line = (pts, a) => `<polyline points="${pts.map(p => p.join(',')).join(' ')}" fill="none" ${a}/>`;
let s = poly([P(-3, 0), P(6, 0), P(6, 9), P(-3, 9)], 'fill="#8f9193" stroke="#f0912a" stroke-width="2"');
const e = 'stroke="#c87a30" stroke-width="1"';
for (let k = 1; k < 9; k++) s += line([P(k - 3, 0), P(k - 3, 9)], e) + line([P(-3, k), P(6, k)], e);
for (let v = 8; v >= 0; v--) {
  for (const c of [8, 7, 6, 0, 5, 1, 4, 2, 3]) {
    const u = c - 3, a = u + .25, b = u + .75, n = v + .25, m = v + .75;
    for (const [x, y, X, Y] of [[u, v, a, n], [u + 1, v, b, n], [u, v + 1, a, m], [u + 1, v + 1, b, m]]) s += line([P(x, y), P(X, Y)], e);
    if (u > 0) s += poly([P(a, n), P(a, n, 1), P(a, m, 1), P(a, m)], 'fill="#6d6f6d" stroke="#c87a30" stroke-width="1"');
    if (u < 0) s += poly([P(b, n), P(b, n, 1), P(b, m, 1), P(b, m)], 'fill="#413e3d" stroke="#c87a30" stroke-width="1"');
    s += poly([P(a, n), P(b, n), P(b, n, 1), P(a, n, 1)], 'fill="#7d7f7e" stroke="#c87a30" stroke-width="1"');
    s += line([P(a, n), P(a, n, 1), P(a, m, 1), P(b, m, 1), P(b, u < 0 ? m : n, u < 0 ? 0 : 1)], 'stroke="#f0912a" stroke-width="1.500"');
    s += poly([P(a, n, 1), P(b, n, 1), P(b, m, 1), P(a, m, 1)], 'fill="#929496" stroke="#c87a30" stroke-width="1"');
    s += line([P(a, n, 1), P(a, m, 1), P(b, m, 1)], 'stroke="#f0912a" stroke-width="1.300"');
  }
}
document.getElementById('mesh').innerHTML = s;
</script>
</body>
</html>
